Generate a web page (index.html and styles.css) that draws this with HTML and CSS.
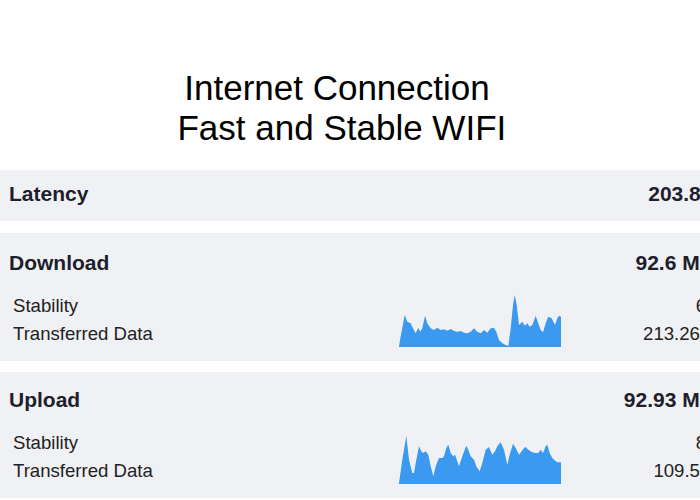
FILE: index.html
```html
<!DOCTYPE html>
<html lang="en">
<head>
<meta charset="utf-8">
<title>Internet Connection</title>
<link rel="stylesheet" href="styles.css">
</head>
<body>
<div class="page">
  <h1 class="title"><span class="line">Internet Connection</span><span class="line">&nbsp;Fast and Stable WIFI</span></h1>

  <section class="panel panel-latency">
    <div class="head">
      <span class="name">Latency</span>
      <span class="value">203.8 ms</span>
    </div>
  </section>

  <section class="panel panel-metric">
    <div class="head">
      <span class="name">Download</span>
      <span class="value">92.6 Mbps</span>
    </div>
    <div class="details">
      <div class="labels">
        <div class="row">Stability</div>
        <div class="row">Transferred Data</div>
      </div>
      <svg class="chart" viewBox="0 0 162 55" width="162" height="55" aria-hidden="true">
        <path d="M0 55 L0 54.7 L1 48 L5.7 23 L8.3 29.7 L11.7 31.3 L14 36.3 L16.7 41.3 L19.3 35.7 L21 39.7 L23.3 36.3 L26 23.7 L28.3 31.3 L31.7 36.3 L35 38 L38.3 35.7 L41.7 38 L45 37.3 L48.3 38.7 L51.7 37 L55 39 L58.3 39.7 L61.7 39 L65 40.7 L68.3 41.3 L71.7 39.7 L75 36.3 L78.3 39.7 L81.7 41.3 L85 38 L88.3 40.7 L91.7 36.3 L95 35.7 L97.3 39.7 L100 48 L103.3 51.3 L106.7 53 L109.3 54 L111.7 36.3 L114 13 L115.7 3 L117.7 13 L120 33 L123.3 29.7 L126 33.7 L128.3 31.3 L130.7 34.7 L133.3 33 L136.7 23.7 L139.3 31.3 L141.7 38 L144 40.3 L146.7 31.3 L149.3 24.7 L152.7 26.3 L156 33 L158.3 26.3 L160 23.7 L162 24.7 L162 55 Z"/>
      </svg>
      <div class="values">
        <div class="row">64%</div>
        <div class="row">213.26 MB</div>
      </div>
    </div>
  </section>

  <section class="panel panel-metric panel-upload">
    <div class="head">
      <span class="name">Upload</span>
      <span class="value">92.93 Mbps</span>
    </div>
    <div class="details">
      <div class="labels">
        <div class="row">Stability</div>
        <div class="row">Transferred Data</div>
      </div>
      <svg class="chart" viewBox="0 0 162 55" width="162" height="55" aria-hidden="true">
        <path d="M0 55 L0 54 L3.3 30.7 L7.3 6.7 L10 30.7 L13.3 44 L15 44 L17.3 30.7 L20 17.3 L22.3 22.3 L24 24 L26.7 22.3 L29.3 25.7 L31.7 37.3 L34.3 47.3 L36.7 37.3 L40 29 L43.3 29 L45 27.3 L47.3 19 L49.3 15.7 L51.7 24 L54.3 27.3 L56 25.7 L60 37.3 L63.3 27.3 L67.3 16.7 L69.3 20.7 L71.7 27.3 L75 30.7 L77.3 37.3 L80.7 42.3 L83.3 34 L86.7 20.7 L90 18 L93.3 25.7 L96 22.3 L98.3 17.3 L101.7 13.3 L105 20.7 L108.3 35.7 L110.7 25.7 L114 14.7 L116.7 19 L120 25.7 L122.7 22.3 L125 19 L126.7 18 L129.3 20.7 L133.3 23.3 L136.7 24 L139.3 24 L141.7 20.7 L144 24 L146.7 17.3 L148.3 15.7 L150.7 24 L153.3 29 L156.7 32.3 L158.3 33.3 L162 33.3 L162 55 Z"/>
      </svg>
      <div class="values">
        <div class="row">82%</div>
        <div class="row">109.5 MB</div>
      </div>
    </div>
  </section>
</div>
</body>
</html>
```
FILE: styles.css
```css
html, body {
  margin: 0;
  padding: 0;
  background: #ffffff;
  overflow: hidden;
}

body {
  font-family: "Liberation Sans", Arial, sans-serif;
  color: #222222;
}

.page {
  width: 746px;
  padding-top: 68px;
}

.title {
  width: 674px;
  margin: 0 0 22px 0;
  font-size: 35px;
  line-height: 40px;
  font-weight: normal;
  color: #000000;
  text-align: center;
}

.title .line {
  display: block;
}

.panel {
  background: #f0f1f5;
  padding: 12px 9px 15px 9px;
}

.panel-metric {
  margin-top: 12px;
  padding: 18px 9px 14px 9px;
}

.panel-upload {
  margin-top: 11px;
  padding-top: 16px;
}

.head {
  display: flex;
  justify-content: space-between;
  align-items: baseline;
  font-size: 21px;
  line-height: 24px;
  font-weight: bold;
  color: #1e1e2c;
}

.details {
  display: grid;
  grid-template-columns: 386px 162px 1fr;
  align-items: end;
  padding: 0 4px;
  margin-top: 17px;
}

.row {
  font-size: 18.6px;
  line-height: 27.5px;
  white-space: nowrap;
}

.labels .row {
  color: #222222;
}

.values {
  text-align: right;
}

.chart {
  display: block;
  fill: #3b99ef;
}
```
